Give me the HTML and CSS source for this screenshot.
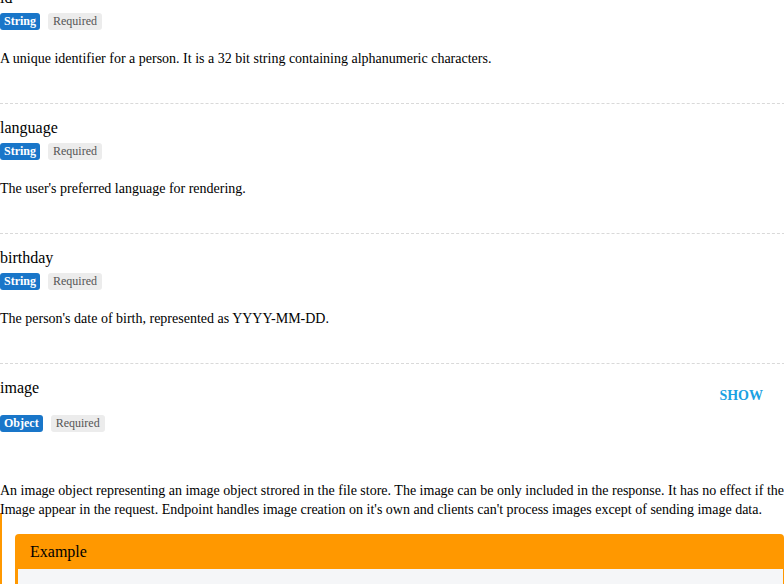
FILE: index.html
```html
<!DOCTYPE html>
<html>
<head>
<meta charset="utf-8">
<link rel="stylesheet" href="styles.css">
</head>
<body>
<div class="fields">
  <div class="field">
    <div class="name">id</div>
    <div class="badges"><span class="badge type">String</span><span class="badge req">Required</span></div>
    <p class="desc">A unique identifier for a person. It is a 32 bit string containing alphanumeric characters.</p>
  </div>
  <div class="field">
    <div class="name">language</div>
    <div class="badges"><span class="badge type">String</span><span class="badge req">Required</span></div>
    <p class="desc">The user's preferred language for rendering.</p>
  </div>
  <div class="field">
    <div class="name">birthday</div>
    <div class="badges"><span class="badge type">String</span><span class="badge req">Required</span></div>
    <p class="desc">The person's date of birth, represented as YYYY-MM-DD.</p>
  </div>
  <div class="field last">
    <div class="head">
      <div class="name">image</div>
      <a class="show">SHOW</a>
    </div>
    <div class="badges"><span class="badge type">Object</span><span class="badge req">Required</span></div>
    <p class="desc wide">An image object representing an image object strored in the file store. The image can be only included in the response. It has no effect if the Image appear in the request. Endpoint handles image creation on it's own and clients can't process images except of sending image data.</p>
    <div class="nested">
      <div class="example">
        <div class="ex-head">Example</div>
        <pre class="code"><span class="k">{</span>                                                                    <span class="s">"id": "a1b2",</span>     <span class="s">"url": "..."</span></pre>
      </div>
    </div>
  </div>
</div>
</body>
</html>
```
FILE: styles.css
```css
html, body {
  margin: 0;
  padding: 0;
  background: #fff;
  overflow: hidden;
}
body {
  width: 784px;
  height: 584px;
  font-family: "Liberation Serif", "Times New Roman", serif;
  color: #000;
}
.fields {
  margin-top: -26px;
  width: 800px;
}
.field {
  padding: 15px 0 35px;
  border-bottom: 1px dashed #d9d9d9;
}
.field.last {
  border-bottom: none;
  padding-bottom: 0;
}
.name {
  font-size: 16px;
  line-height: 18px;
}
.head {
  display: flex;
  justify-content: space-between;
  height: 30px;
  width: 784px;
}
.show {
  font-size: 14px;
  font-weight: bold;
  color: #1ba1e2;
  line-height: 18px;
  padding-top: 8px;
  margin-right: 21px;
}
.badges {
  display: flex;
  gap: 8px;
  margin-top: 6px;
  height: 17px;
}
.badge {
  font-size: 12px;
  line-height: 17px;
  padding: 0 4px;
  border-radius: 3px;
}
.badge.type {
  background: #1976c9;
  color: #fff;
  font-weight: bold;
}
.badge.req {
  background: #ececec;
  color: #555;
  padding: 0 5px;
}
.desc {
  margin: 19px 0 0;
  font-size: 14px;
  line-height: 19px;
}
.desc.wide {
  margin-top: 49px;
  width: 790px;
}
.nested {
  margin-top: -6px;
  border-left: 2px solid #ff9800;
  padding: 21px 0 0 13px;
  width: 769px;
}
.example {
  border-radius: 4px 4px 0 0;
  overflow: hidden;
}
.ex-head {
  background: #ff9800;
  font-size: 16px;
  line-height: 35px;
  padding-left: 15px;
}
.code {
  margin: 0;
  background: #f5f6f8;
  border-left: 3px solid #ff9800;
  border-right: 1px solid #ff9800;
  padding: 13px 16px;
  font-family: "Liberation Mono", monospace;
  font-size: 12px;
  line-height: 16px;
  height: 60px;
}
.code .k { color: #f0a040; }
.code .s { color: #999; }
```
